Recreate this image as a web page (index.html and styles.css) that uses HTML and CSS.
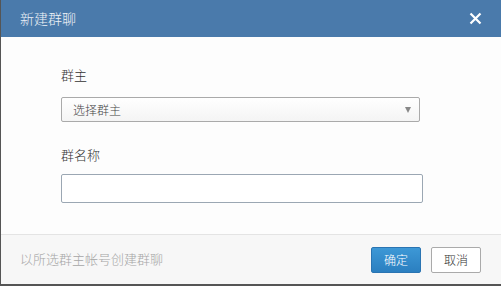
FILE: index.html
```html
<!DOCTYPE html>
<html>
<head>
<meta charset="utf-8">
<link rel="stylesheet" href="styles.css">
</head>
<body>
<div class="modal">
  <div class="header">
    <span class="title">新建群聊</span>
    <svg class="close" width="13" height="13" viewBox="0 0 13 13"><path d="M1.5 1.5L11.5 11.5M11.5 1.5L1.5 11.5" stroke="#fff" stroke-width="2.2" fill="none"/></svg>
  </div>
  <div class="body">
    <div class="label">群主</div>
    <div class="select"><span>选择群主</span><span class="arrow"></span></div>
    <div class="label label2">群名称</div>
    <div class="input"></div>
  </div>
  <div class="footer">
    <span class="hint">以所选群主帐号创建群聊</span>
    <div class="btns">
      <div class="btn primary">确定</div>
      <div class="btn">取消</div>
    </div>
  </div>
</div>
</body>
</html>
```
FILE: styles.css
```css
html, body { margin: 0; padding: 0; }
body {
  width: 501px; height: 286px; overflow: hidden;
  background: #555;
  font-family: "Noto Sans CJK SC", "Liberation Sans", sans-serif;
}
.modal {
  margin-left: 1px;
  width: 500px; height: 284px;
  display: flex; flex-direction: column;
  background: #fdfdfd;
}
.header {
  height: 37px; flex: none;
  background: #4a7aab;
  display: flex; align-items: center; justify-content: space-between;
  padding: 0 19px 0 19px;
  box-sizing: border-box;
}
.title { color: #eef2f7; font-size: 14px; line-height: 16px; margin-top: -2px; font-weight: 300; }
.close { margin-top: 0px; }
.body {
  flex: 1;
  padding: 30px 0 0 60px;
  display: flex; flex-direction: column;
}
.label { font-size: 13px; color: #333; line-height: 16px; height: 16px; font-weight: 300; }
.select {
  margin-top: 14px;
  width: 359px; height: 25px; box-sizing: border-box;
  border: 1px solid #aaa; border-radius: 2px;
  background: linear-gradient(#ffffff, #f4f4f4);
  display: flex; align-items: center; justify-content: space-between;
  padding: 0 8px 0 11px;
  font-size: 12px; color: #444; font-weight: 300;
}
.arrow {
  width: 0; height: 0;
  border-left: 3.5px solid transparent; border-right: 3.5px solid transparent;
  border-top: 6px solid #888;
}
.label2 { margin-top: 25px; }
.input {
  margin-top: 11px;
  width: 362px; height: 29px; box-sizing: border-box;
  border: 1px solid #9ba7b3; border-radius: 2px;
  background: #fff;
}
.footer {
  height: 50px; flex: none;
  border-top: 1px solid #e4e4e4;
  background: #f7f7f7;
  display: flex; align-items: center; justify-content: space-between;
  padding: 0 20px 0 19px;
  box-sizing: border-box;
}
.hint { font-size: 13px; color: #a6a6a6; margin-top: -2px; font-weight: 300; }
.btns { display: flex; gap: 10px; margin-top: 0px; }
.btn {
  width: 50px; height: 26px; box-sizing: border-box;
  border: 1px solid #aaa; border-radius: 2px;
  background: #fff; color: #333; font-size: 12px; font-weight: 300;
  display: flex; align-items: center; justify-content: center;
}
.btn.primary {
  background: linear-gradient(#3d98d6, #2b7fc0);
  border-color: #2a74b2; color: #fff;
}
```
